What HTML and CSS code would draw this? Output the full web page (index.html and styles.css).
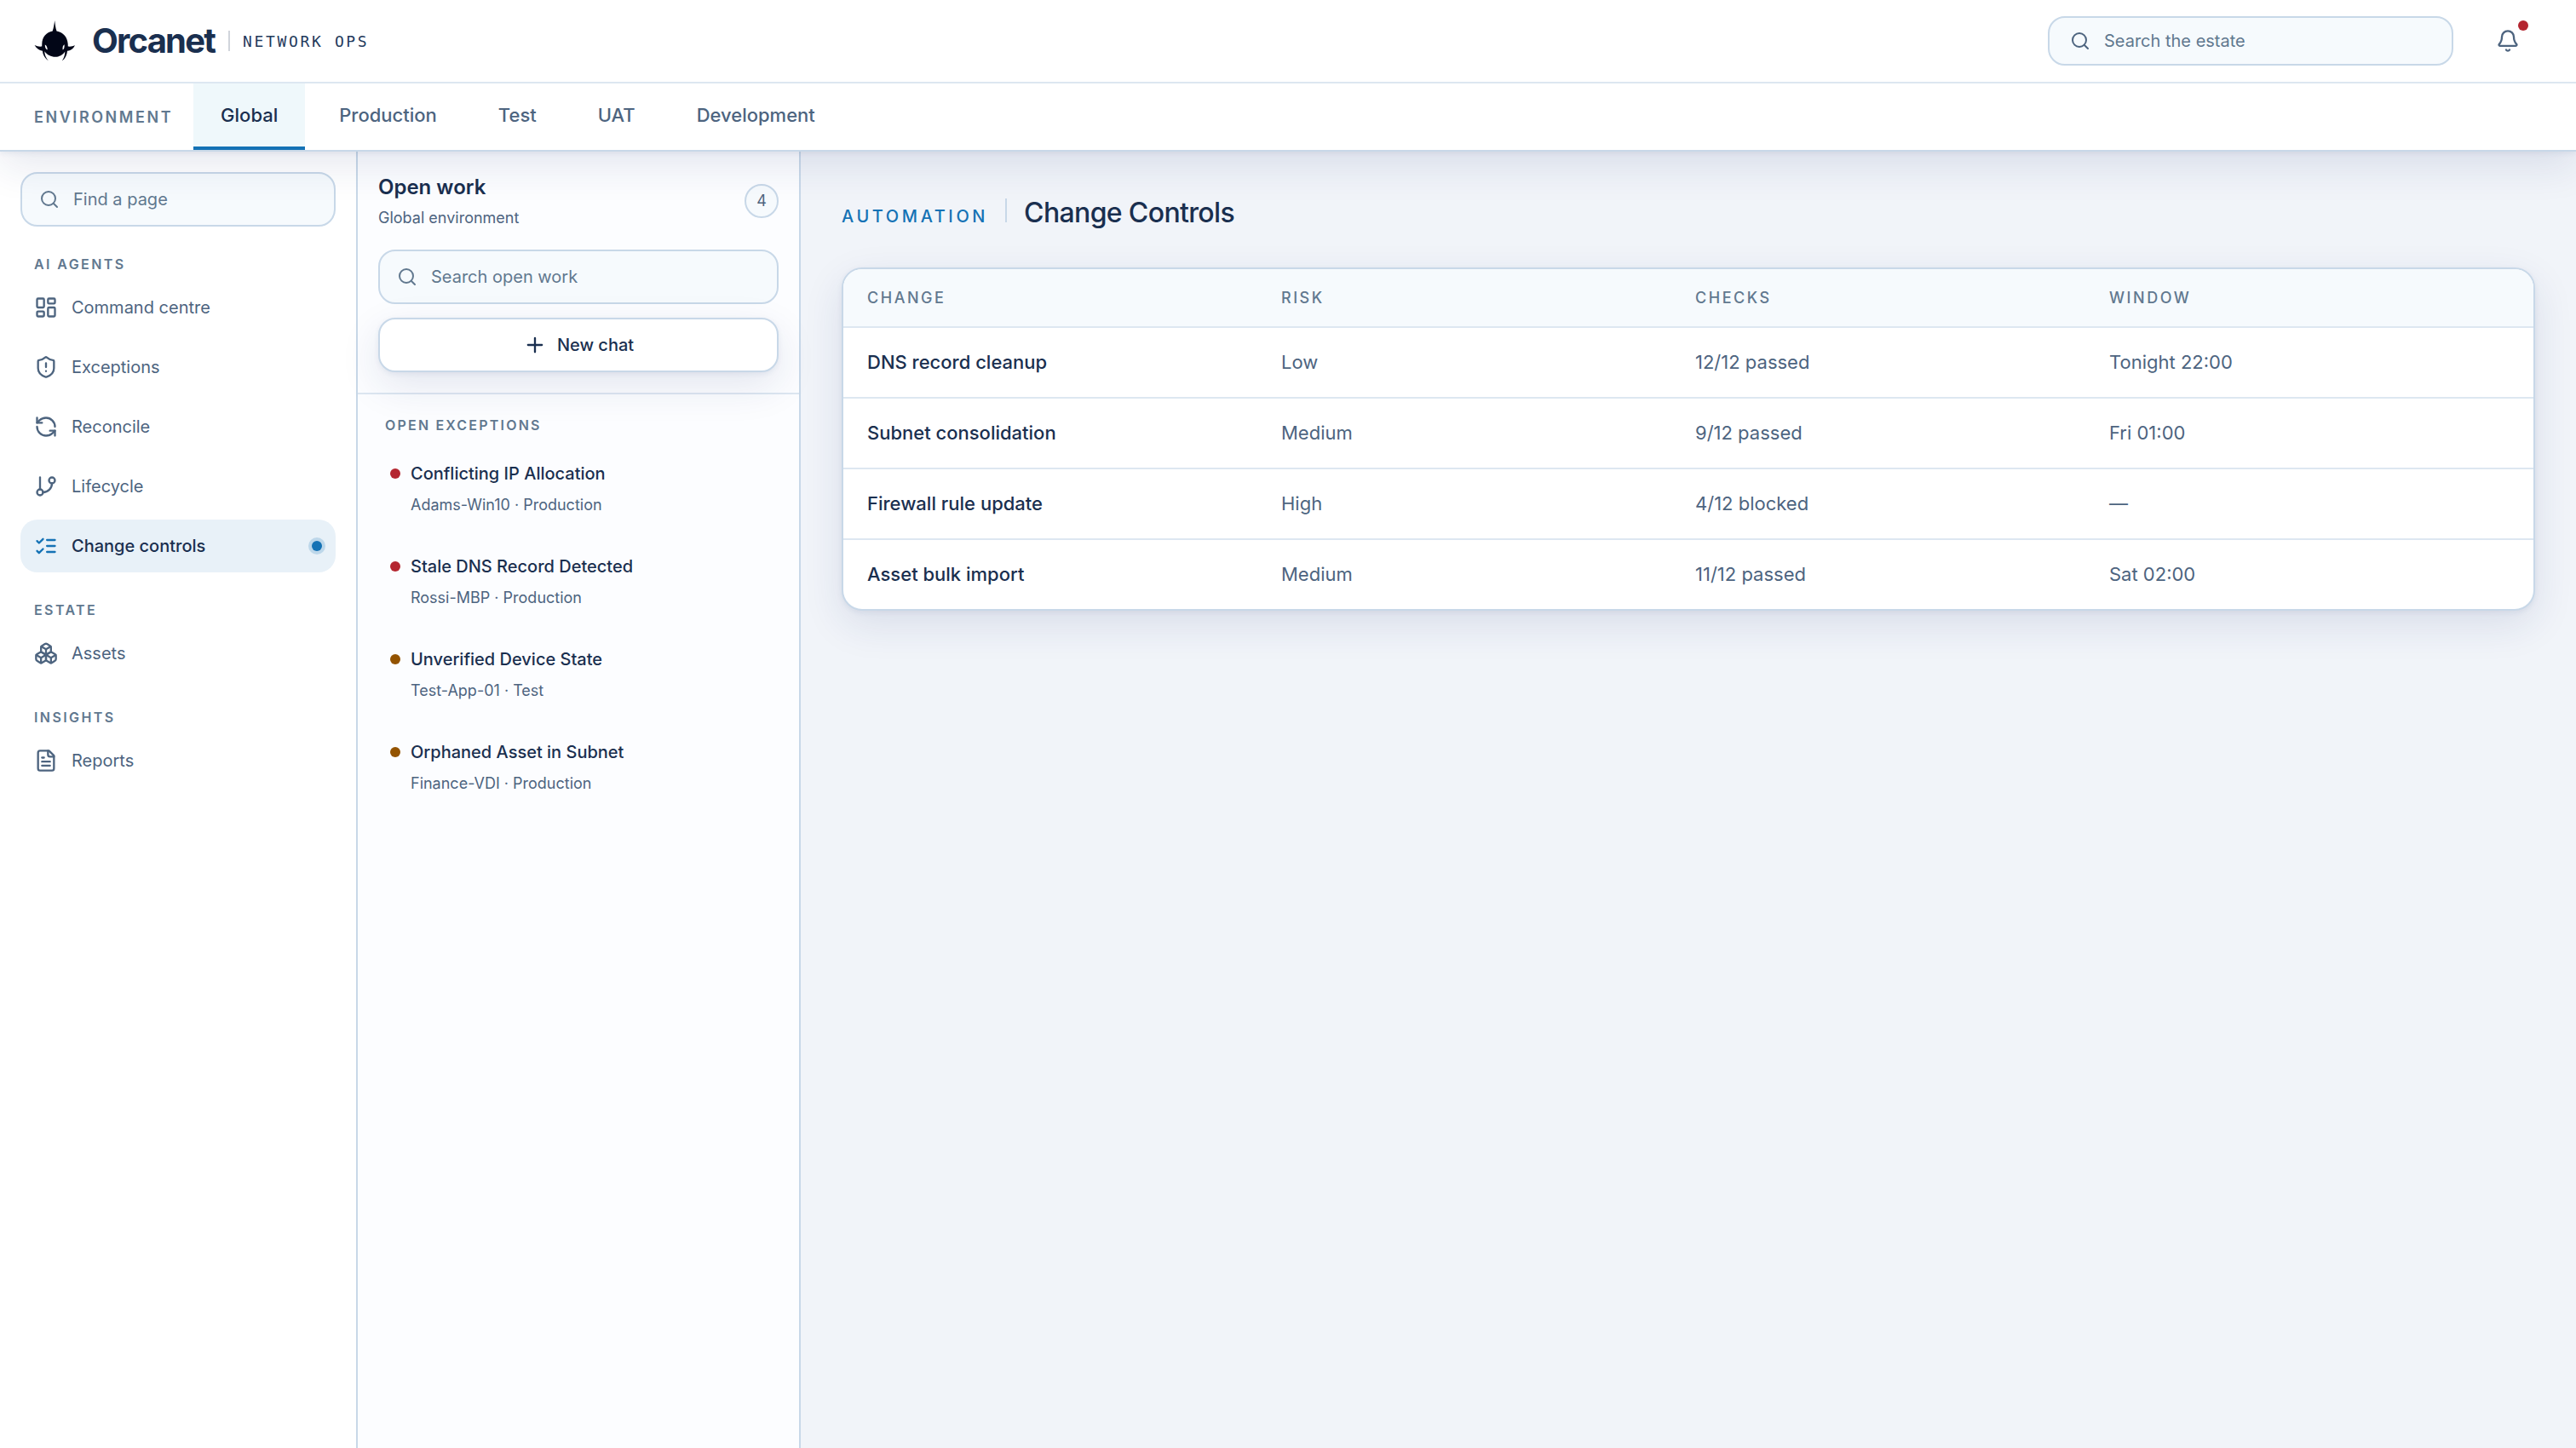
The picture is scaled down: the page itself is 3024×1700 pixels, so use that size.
FILE: index.html
```html
<!DOCTYPE html>
<html lang="en">
<head>
    <meta charset="UTF-8">
    <meta name="viewport" content="width=device-width, initial-scale=1.0">
    <title>Orcanet - Change Controls</title>
    <link rel="stylesheet" href="styles.css">
</head>
<body>
    <header class="topbar">
        <div class="brand">
            <svg class="brand-logo" viewBox="0 0 48 48" aria-hidden="true">
                <path d="M24.2 0c.5 4 .9 8.500 2.300 12.400C34 13.600 39.200 19.500 39.700 27.500l.1 3c2.800.4 5.600-.1 8.200-1.300-1.500 3-4 6-9 6.500-.3 4.600-2.200 8.800-6.200 11.900 2.400-3.600 3.500-7.400 3.500-11.100C33.600 40.500 29.600 42.800 24.800 42.800S15.300 40.500 12.300 36.300c.1 4 1.500 7.500 4.600 11.100-4.200-2.800-6.600-6.800-7-11.600C6 35.200 2.600 33 .6 29.100c2.800 1.300 5.700 1.800 8.600 1.400l.1-3C9.400 19.500 14.500 13.600 21.700 12.400 23 8.500 23.700 4 24.200 0z"/>
                <path class="brand-eye" d="M12.8 28.400c1.800.7 3 3 2.900 6-1.900-.5-3-2.800-2.900-6zM35.600 28.200c-1.700.8-2.400 3.200-2 6.400 1.600-.6 2.300-3 2-6.400z"/>
            </svg>
            <span class="brand-name">Orcanet</span>
            <span class="brand-divider"></span>
            <span class="brand-sub">NETWORK OPS</span>
        </div>
        <div class="topbar-actions">
            <label class="search search-top">
                <svg class="icon icon-sm" viewBox="0 0 24 24"><circle cx="11" cy="11" r="8"/><path d="m21 21-4.3-4.3"/></svg>
                <span>Search the estate</span>
            </label>
            <button class="bell" aria-label="Notifications">
                <svg class="icon" viewBox="0 0 24 24"><path d="M10.268 21a2 2 0 0 0 3.464 0"/><path d="M3.262 15.326A1 1 0 0 0 4 17h16a1 1 0 0 0 .74-1.673C19.41 13.956 18 12.499 18 8A6 6 0 0 0 6 8c0 4.499-1.411 5.956-2.738 7.326"/></svg>
                <span class="bell-dot"></span>
            </button>
        </div>
    </header>

    <nav class="environments">
        <span class="env-label">ENVIRONMENT</span>
        <a class="env-tab active">Global</a>
        <a class="env-tab">Production</a>
        <a class="env-tab">Test</a>
        <a class="env-tab">UAT</a>
        <a class="env-tab">Development</a>
    </nav>

    <div class="layout">
        <aside class="sidebar">
            <label class="search">
                <svg class="icon icon-sm" viewBox="0 0 24 24"><circle cx="11" cy="11" r="8"/><path d="m21 21-4.3-4.3"/></svg>
                <span>Find a page</span>
            </label>

            <h2 class="nav-title">AI AGENTS</h2>
            <ul class="nav-list">
                <li class="nav-item">
                    <svg class="icon" viewBox="0 0 24 24"><rect x="3" y="3" width="7" height="9" rx="1"/><rect x="14" y="3" width="7" height="5" rx="1"/><rect x="14" y="12" width="7" height="9" rx="1"/><rect x="3" y="16" width="7" height="5" rx="1"/></svg>
                    <span>Command centre</span>
                </li>
                <li class="nav-item">
                    <svg class="icon" viewBox="0 0 24 24"><path d="M20 13c0 5-3.5 7.5-7.66 8.95a1 1 0 0 1-.67-.01C7.5 20.5 4 18 4 13V6a1 1 0 0 1 1-1c2 0 4.5-1.2 6.24-2.72a1.17 1.17 0 0 1 1.52 0C14.51 3.81 17 5 19 5a1 1 0 0 1 1 1z"/><path d="M12 8v4M12 16h.01"/></svg>
                    <span>Exceptions</span>
                </li>
                <li class="nav-item">
                    <svg class="icon" viewBox="0 0 24 24"><path d="M21 12a9 9 0 0 0-9-9 9.75 9.75 0 0 0-6.74 2.74L3 8"/><path d="M3 3v5h5M3 12a9 9 0 0 0 9 9 9.75 9.75 0 0 0 6.74-2.74L21 16"/><path d="M16 16h5v5"/></svg>
                    <span>Reconcile</span>
                </li>
                <li class="nav-item">
                    <svg class="icon" viewBox="0 0 24 24"><path d="M6 3v12"/><circle cx="18" cy="6" r="3"/><circle cx="6" cy="18" r="3"/><path d="M18 9a9 9 0 0 1-9 9"/></svg>
                    <span>Lifecycle</span>
                </li>
                <li class="nav-item active">
                    <svg class="icon" viewBox="0 0 24 24"><path d="m3 17 2 2 4-4M3 7l2 2 4-4M13 6h8M13 12h8M13 18h8"/></svg>
                    <span>Change controls</span>
                    <i class="nav-dot"></i>
                </li>
            </ul>

            <h2 class="nav-title">ESTATE</h2>
            <ul class="nav-list">
                <li class="nav-item">
                    <svg class="icon" viewBox="0 0 24 24"><path d="M2.97 12.92A2 2 0 0 0 2 14.63v3.24a2 2 0 0 0 .97 1.71l3 1.8a2 2 0 0 0 2.06 0L12 19v-5.5l-5-3-4.03 2.42Z"/><path d="m7 16.5-4.74-2.85M7 16.5l5-3M7 16.5v5.17"/><path d="M12 13.5V19l3.97 2.38a2 2 0 0 0 2.06 0l3-1.8a2 2 0 0 0 .97-1.71v-3.24a2 2 0 0 0-.97-1.71L17 10.5l-5 3Z"/><path d="m17 16.5-5-3M17 16.5l4.74-2.85M17 16.5v5.17"/><path d="M7.97 4.42A2 2 0 0 0 7 6.13v4.37l5 3 5-3V6.13a2 2 0 0 0-.97-1.71l-3-1.8a2 2 0 0 0-2.06 0l-3 1.8Z"/><path d="M12 8 7.26 5.15M12 8l4.74-2.85M12 13.5V8"/></svg>
                    <span>Assets</span>
                </li>
            </ul>

            <h2 class="nav-title">INSIGHTS</h2>
            <ul class="nav-list">
                <li class="nav-item">
                    <svg class="icon" viewBox="0 0 24 24"><path d="M15 2H6a2 2 0 0 0-2 2v16a2 2 0 0 0 2 2h12a2 2 0 0 0 2-2V7Z"/><path d="M14 2v4a2 2 0 0 0 2 2h4M10 9H8M16 13H8M16 17H8"/></svg>
                    <span>Reports</span>
                </li>
            </ul>
        </aside>

        <section class="work">
            <div class="work-head">
                <div class="work-title-row">
                    <div>
                        <h2 class="work-title">Open work</h2>
                        <p class="work-sub">Global environment</p>
                    </div>
                    <span class="work-count">4</span>
                </div>
                <label class="search">
                    <svg class="icon icon-sm" viewBox="0 0 24 24"><circle cx="11" cy="11" r="8"/><path d="m21 21-4.3-4.3"/></svg>
                    <span>Search open work</span>
                </label>
                <button class="new-chat">
                    <svg class="icon" viewBox="0 0 24 24"><path d="M5 12h14M12 5v14"/></svg>
                    <span>New chat</span>
                </button>
            </div>
            <h3 class="work-group">OPEN EXCEPTIONS</h3>
            <ul class="work-list">
                <li class="work-item">
                    <i class="dot critical"></i>
                    <div>
                        <strong>Conflicting IP Allocation</strong>
                        <p>Adams-Win10 · Production</p>
                    </div>
                </li>
                <li class="work-item">
                    <i class="dot critical"></i>
                    <div>
                        <strong>Stale DNS Record Detected</strong>
                        <p>Rossi-MBP · Production</p>
                    </div>
                </li>
                <li class="work-item">
                    <i class="dot warning"></i>
                    <div>
                        <strong>Unverified Device State</strong>
                        <p>Test-App-01 · Test</p>
                    </div>
                </li>
                <li class="work-item">
                    <i class="dot warning"></i>
                    <div>
                        <strong>Orphaned Asset in Subnet</strong>
                        <p>Finance-VDI · Production</p>
                    </div>
                </li>
            </ul>
        </section>

        <main class="main">
            <div class="page-head">
                <span class="page-kicker">AUTOMATION</span>
                <span class="page-divider"></span>
                <h1 class="page-title">Change Controls</h1>
            </div>
            <div class="table">
                <div class="row row-head"><span>CHANGE</span><span>RISK</span><span>CHECKS</span><span>WINDOW</span></div>
                <div class="row"><strong>DNS record cleanup</strong><span>Low</span><span>12/12 passed</span><span>Tonight 22:00</span></div>
                <div class="row"><strong>Subnet consolidation</strong><span>Medium</span><span>9/12 passed</span><span>Fri 01:00</span></div>
                <div class="row"><strong>Firewall rule update</strong><span>High</span><span>4/12 blocked</span><span>—</span></div>
                <div class="row"><strong>Asset bulk import</strong><span>Medium</span><span>11/12 passed</span><span>Sat 02:00</span></div>
            </div>
        </main>
    </div>
</body>
</html>
```
FILE: styles.css
```css
* {
    box-sizing: border-box;
    margin: 0;
    padding: 0;
}

body {
    display: flex;
    flex-direction: column;
    height: 100vh;
    overflow: hidden;
    font-family: 'Inter', sans-serif;
    font-size: 22px;
    line-height: 1.5;
    color: #1a2f4f;
    background-color: #f1f4f9;
}

ul {
    list-style: none;
}

button {
    font: inherit;
    color: inherit;
    border: none;
    background: none;
}

strong {
    font-weight: 500;
}

.icon {
    flex: none;
    width: 28px;
    height: 28px;
    fill: none;
    stroke: currentColor;
    stroke-width: 2;
    stroke-linecap: round;
    stroke-linejoin: round;
}

.icon-sm {
    width: 24px;
    height: 24px;
}

/* Top bar */
.topbar {
    flex: none;
    display: flex;
    align-items: center;
    justify-content: space-between;
    height: 98px;
    padding: 0 40px;
    background-color: #fff;
    border-bottom: 2px solid #dde7f1;
    position: relative;
    z-index: 2;
}

.brand {
    display: flex;
    align-items: center;
}

.brand-logo {
    width: 48px;
    height: 48px;
    fill: #020617;
}

.brand-eye {
    fill: #fff;
}

.brand-name {
    margin-left: 20px;
    font-size: 40px;
    font-weight: 700;
    letter-spacing: -1.8px;
}

.brand-divider {
    width: 2px;
    height: 24px;
    margin: 0 15px 0 16px;
    background-color: #d1d5db;
}

.brand-sub {
    font-family: 'DejaVu Sans Mono', monospace;
    font-size: 18px;
    letter-spacing: 2.64px;
    color: #1f3a5c;
}

.topbar-actions {
    display: flex;
    align-items: center;
    gap: 24px;
}

.search {
    display: flex;
    align-items: center;
    gap: 16px;
    height: 64px;
    padding: 0 20px;
    font-size: 20px;
    color: #61788f;
    background-color: #f6fafd;
    border: 2px solid #c8d8e8;
    border-radius: 20px;
}

.search-top {
    width: 476px;
    height: 58px;
    padding: 0 24px;
}

.search-top .icon {
    color: #4d647f;
}

.bell {
    position: relative;
    display: flex;
    align-items: center;
    justify-content: center;
    width: 80px;
    height: 64px;
    color: #4d647f;
}

.bell-dot {
    position: absolute;
    top: 8px;
    right: 16px;
    width: 12px;
    height: 12px;
    border-radius: 50%;
    background-color: #b42630;
}

/* Environment tabs */
.environments {
    flex: none;
    display: flex;
    gap: 8px;
    height: 80px;
    padding: 0 40px;
    background-color: #fff;
    border-bottom: 2px solid #c8d8e8;
    box-shadow: 0 2px 6px rgba(24, 50, 110, 0.07), 0 16px 48px rgba(24, 50, 110, 0.11);
    position: relative;
    z-index: 1;
}

.env-label {
    align-self: center;
    margin-right: 16px;
    padding-top: 1px;
    font-size: 18px;
    font-weight: 600;
    letter-spacing: 2.56px;
    color: #61788f;
}

.env-tab {
    display: flex;
    align-items: center;
    padding: 1px 32px 0;
    font-weight: 500;
    color: #4d647f;
    border-bottom: 4px solid transparent;
}

.env-tab.active {
    color: #1a2f4f;
    background-color: #eff8fb;
    border-bottom-color: #1472b5;
}

.layout {
    flex: 1;
    display: flex;
    min-height: 0;
}

/* Sidebar */
.sidebar {
    flex: none;
    width: 420px;
    padding: 24px;
    background-color: #fff;
    border-right: 2px solid #c8d8e8;
}

.nav-title {
    height: 64px;
    padding: 32px 16px 0;
    font-size: 16px;
    font-weight: 600;
    line-height: 24px;
    letter-spacing: 2.4px;
    color: #61788f;
}

.nav-list {
    display: flex;
    flex-direction: column;
    gap: 8px;
}

.nav-item {
    display: flex;
    align-items: center;
    gap: 16px;
    height: 62px;
    padding: 0 16px;
    font-size: 20px;
    color: #4d647f;
    border-radius: 20px;
}

.nav-item.active {
    font-weight: 500;
    color: #1a2f4f;
    background-color: #e8f1f8;
}

.nav-item.active .icon {
    color: #1472b5;
}

.nav-dot {
    width: 12px;
    height: 12px;
    margin-left: auto;
    border-radius: 50%;
    background-color: #1472b5;
    box-shadow: 0 0 0 4px rgba(20, 114, 181, 0.2);
}

/* Open work panel */
.work {
    flex: none;
    width: 520px;
    background-color: #fcfdff;
    border-right: 2px solid #c8d8e8;
}

.work-head {
    padding: 24px;
    border-bottom: 2px solid #dde7f1;
}

.work-title-row {
    display: flex;
    align-items: center;
    justify-content: space-between;
    margin-bottom: 24px;
}

.work-title {
    font-size: 24px;
    font-weight: 600;
}

.work-sub {
    margin-top: 4px;
    font-size: 18px;
    color: #4d647f;
}

.work-count {
    display: flex;
    align-items: center;
    justify-content: center;
    width: 40px;
    height: 40px;
    font-size: 18px;
    color: #4d647f;
    background-color: #f6fafd;
    border: 2px solid #c8d8e8;
    border-radius: 50%;
}

.new-chat {
    display: flex;
    align-items: center;
    justify-content: center;
    gap: 12px;
    width: 100%;
    height: 64px;
    margin-top: 16px;
    font-size: 20px;
    font-weight: 500;
    background-color: #fff;
    border: 2px solid #c8d8e8;
    border-radius: 20px;
    box-shadow: 0 2px 6px rgba(24, 50, 110, 0.07), 0 16px 48px rgba(24, 50, 110, 0.11);
}

.work-group {
    padding: 24px 32px 14px;
    font-size: 16px;
    font-weight: 600;
    line-height: 24px;
    letter-spacing: 2.2px;
    color: #61788f;
}

.work-list {
    display: flex;
    flex-direction: column;
    gap: 11px;
    padding: 0 24px;
}

.work-item {
    display: flex;
    gap: 12px;
    height: 98px;
    padding: 16px 14px;
    font-size: 20px;
    line-height: 30px;
}

.work-item p {
    margin-top: 8px;
    font-size: 18px;
    line-height: 27px;
    color: #4d647f;
}

.dot {
    flex: none;
    width: 12px;
    height: 12px;
    margin-top: 9px;
    border-radius: 50%;
}

.dot.critical {
    background-color: #b42630;
}

.dot.warning {
    background-color: #935300;
}

/* Main content */
.main {
    flex: 1;
    padding: 48px;
}

.page-head {
    display: flex;
    align-items: baseline;
    gap: 20px;
    margin-bottom: 40px;
}

.page-kicker {
    font-size: 20px;
    font-weight: 500;
    letter-spacing: 3.6px;
    color: #1472b5;
}

.page-divider {
    width: 2px;
    height: 28px;
    background-color: #c8d8e8;
}

.page-title {
    font-size: 32px;
    font-weight: 500;
    letter-spacing: -0.64px;
}

.table {
    overflow: hidden;
    background-color: #fff;
    border: 2px solid #c8d8e8;
    border-radius: 24px;
    box-shadow: 0 2px 6px rgba(24, 50, 110, 0.07), 0 16px 48px rgba(24, 50, 110, 0.11);
}

.row {
    display: grid;
    grid-template-columns: repeat(4, 1fr);
    gap: 16px;
    align-items: center;
    height: 83px;
    padding: 0 28px;
    color: #4d647f;
    border-bottom: 2px solid #dde7f1;
}

.row strong {
    color: #1a2f4f;
}

.row:last-child {
    height: 81px;
    border-bottom: none;
}

.row-head {
    height: 69px;
    font-size: 18px;
    font-weight: 500;
    letter-spacing: 2.52px;
    color: #61788f;
    background-color: #f6fafd;
}
```
